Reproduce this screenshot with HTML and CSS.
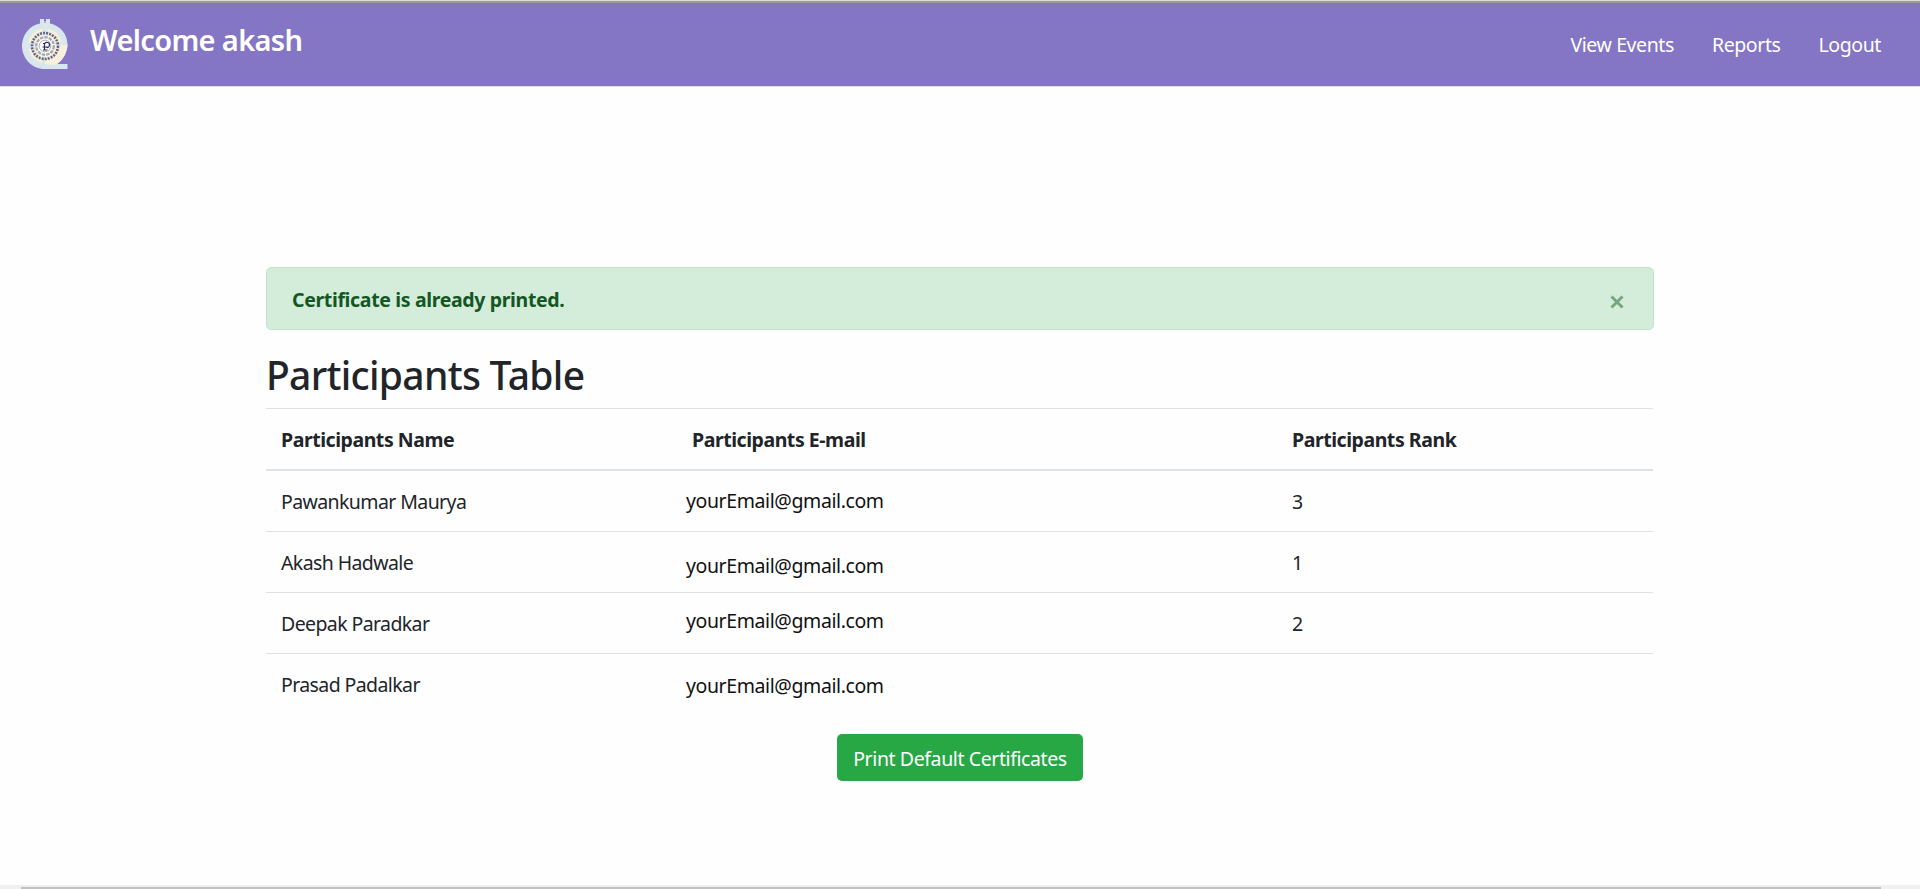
FILE: index.html
```html
<!DOCTYPE html>
<html lang="en">
<head>
<meta charset="utf-8">
<title>Participants</title>
<link rel="stylesheet" href="styles.css">
</head>
<body>
<nav class="navbar">
  <svg class="logo" width="46" height="50" viewBox="0 0 46 50">
    <path d="M18 4.500V0h4v4h2V0h4v4.500C38 6.500 45.500 15 45.500 25.500C45 34 41 41 35 45h10.500v5H23C10 50 0 39.500 0 27C0 16 7.500 6.500 18 4.500Z" fill="#d8e6ef"/>
    <path d="M23 26H45.500C45 34 41 41 35 45C31 46.500 26 46 23 45Z" fill="#f8f0da"/>
    <path d="M6 24A18 18 0 0 1 20 9.500L22 22ZM26 9.500A18 18 0 0 1 40 23L26 24ZM6 30A18 18 0 0 0 20 44L22 30Z" fill="#f5efd9"/>
    <path d="M23 2v10M0 26h7M39 26h6.500" stroke="#efe9d8" stroke-width="1"/>
    <circle cx="23" cy="27" r="10.500" fill="#fafafa"/>
    <circle cx="23" cy="27" r="13" fill="none" stroke="#4b4d78" stroke-width="2.600" stroke-dasharray="2 1.100" stroke-opacity=".85"/>
    <circle cx="23" cy="27" r="8.800" fill="none" stroke="#a9aaa9" stroke-width="2.400" stroke-dasharray="3.500 1"/>
    <circle cx="23" cy="27" r="5.800" fill="#fff" stroke="#b4b4b8" stroke-width="1"/>
    <path d="M22.500 31.500V25a2.600 2.600 0 1 1 2 3.500M20.500 28h5M21 31h4.500M21 24.500h1.500" fill="none" stroke="#29295e" stroke-width="1.200"/>
  </svg>
  <span class="brand">Welcome akash</span>
  <div class="links">
    <a class="link-events">View Events</a>
    <a class="link-reports">Reports</a>
    <a class="link-logout">Logout</a>
  </div>
</nav>
<main class="container">
  <div class="alert">
    <strong>Certificate is already printed.</strong>
    <svg class="close" width="14" height="14" viewBox="0 0 14 14"><path d="M1.500 1.500l11 11M12.500 1.500l-11 11" stroke="#76a681" stroke-width="2.900"/></svg>
  </div>
  <h1 class="title">Participants Table</h1>
  <table class="table">
    <thead>
      <tr><th class="col-name">Participants Name</th><th class="col-mail">Participants E-mail</th><th class="col-rank">Participants Rank</th></tr>
    </thead>
    <tbody>
      <tr><td class="name">Pawankumar Maurya</td><td><span class="mail mail-1">yourEmail@gmail.com</span></td><td>3</td></tr>
      <tr><td class="name">Akash Hadwale</td><td><span class="mail mail-2">yourEmail@gmail.com</span></td><td>1</td></tr>
      <tr><td class="name">Deepak Paradkar</td><td><span class="mail mail-3">yourEmail@gmail.com</span></td><td>2</td></tr>
      <tr><td class="name">Prasad Padalkar</td><td><span class="mail mail-4">yourEmail@gmail.com</span></td><td></td></tr>
    </tbody>
  </table>
  <button class="btn">Print Default Certificates</button>
</main>
<div class="scrollbar"><div class="thumb"></div></div>
</body>
</html>
```
FILE: styles.css
```css
* { box-sizing: border-box; }
body {
  margin: 0;
  height: 889px;
  display: flex;
  flex-direction: column;
  overflow: hidden;
  background: #fefefe;
  color: #212529;
  font: 19.5px/30px "Noto Sans", sans-serif;
  letter-spacing: -0.4px;
}
.navbar {
  height: 87px;
  flex: none;
  display: flex;
  align-items: flex-start;
  padding: 16px 39px 0 22px;
  background: #8476c4;
  border-bottom: 1px solid #dedde3;
  box-shadow: inset 0 1px #dededb, inset 0 3px #9b9c98;
  color: #fff;
}
.logo { flex: none; margin-top: 3px; }
.brand {
  margin-left: 22px;
  font-size: 29px;
  font-weight: 600;
  line-height: 48px;
  letter-spacing: -0.65px;
}
.links { margin: 14px 0 0 auto; display: flex; gap: 38px; }
.container { width: 1388px; margin: 180px auto 0; flex: 1; }
.alert {
  height: 63px;
  display: flex;
  justify-content: space-between;
  padding: 17px 29px 0 25px;
  border: 1px solid #c3e6cb;
  border-radius: 5px;
  background: #d4edda;
  color: #155724;
}
.alert strong { font-weight: 700; letter-spacing: -0.35px; }
.close { margin-top: 10px; }
.title {
  margin: 21px 0 9px;
  font-size: 39px;
  font-weight: 500;
  line-height: 48px;
  letter-spacing: -0.7px;
}
.table { width: 1387px; table-layout: fixed; border-collapse: separate; border-spacing: 0; }
.table th, .table td {
  height: 61px;
  padding: 16px 15px 14px;
  border-top: 1px solid #dee2e6;
  text-align: left;
  vertical-align: top;
  font-weight: 400;
}
.table th { height: 63px; font-weight: 700; letter-spacing: -0.45px; border-bottom: 2px solid #dee2e6; }
.table tbody tr:first-child td { border-top: 0; height: 60px; }
.table .name { letter-spacing: -0.6px; }
.col-name { width: 411px; }
.col-mail { width: 600px; }
.mail { position: relative; color: #111; }
.mail-1 { left: -6px; top: -1px; }
.mail-2 { left: -6px; top: 3px; }
.mail-3 { left: -6px; top: -3px; }
.mail-4 { left: -6px; top: 1px; }
.btn {
  display: block;
  width: 246px;
  height: 47px;
  margin: 20px auto 0;
  padding: 2px 0 0;
  border: 0;
  border-radius: 5px;
  background: #28a745;
  color: #fff;
  font: inherit;
  letter-spacing: -0.4px;
  white-space: nowrap;
}
.scrollbar { height: 4px; flex: none; padding: 2px 39px 0 21px; background: #f0f0f0; }
.thumb { height: 2px; background: #c1c1c1; }
```
